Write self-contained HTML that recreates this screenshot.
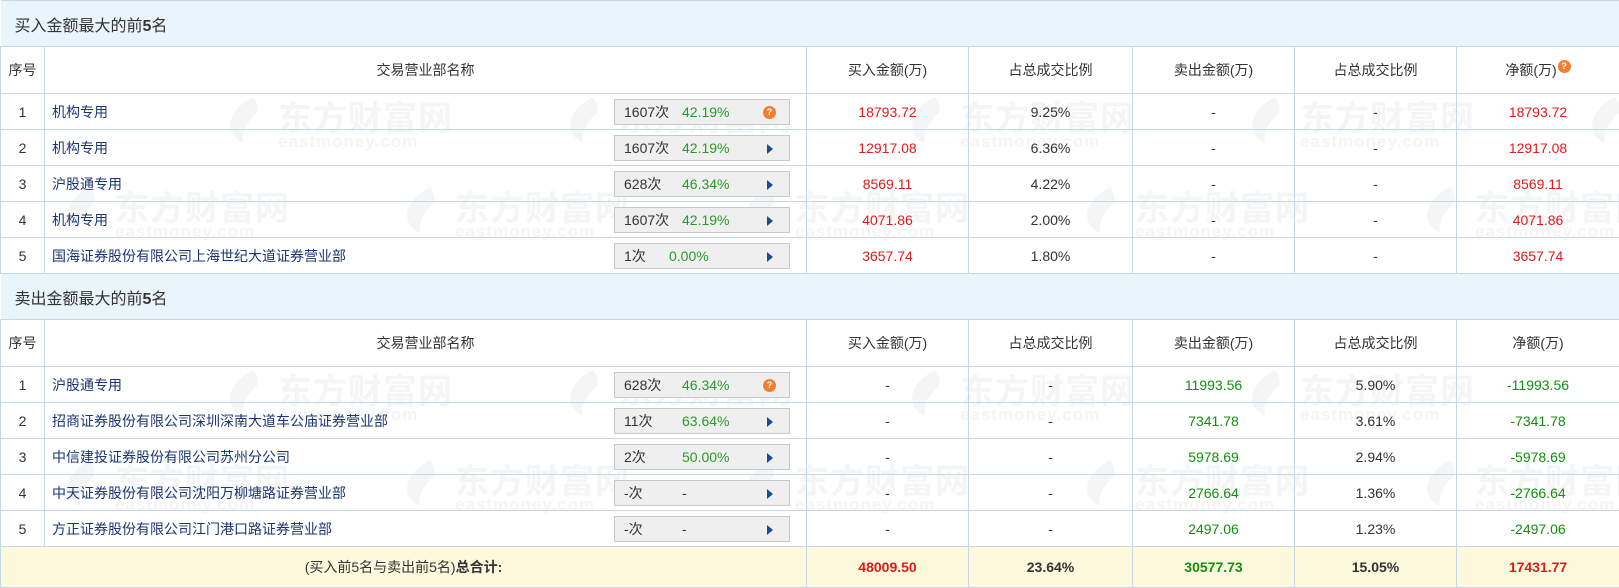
<!DOCTYPE html>
<html><head><meta charset="utf-8"><style>
*{margin:0;padding:0;box-sizing:border-box}
body{width:1619px;height:587px;overflow:hidden;background:#fff;font-family:"Liberation Sans","Noto Sans CJK SC",sans-serif;font-size:14px;color:#333;position:relative}
.wm{position:absolute;width:230px;height:55px;pointer-events:none}
.wm .lg{position:absolute;left:0;top:0;width:40px;height:50px;}
.wm .t1{position:absolute;left:55px;top:-4px;font-size:34px;font-weight:bold;color:#f5f5f5;letter-spacing:1px;white-space:nowrap;font-family:"Noto Sans CJK SC",sans-serif}
.wm .t2{position:absolute;left:55px;top:37px;font-size:17px;font-weight:bold;color:#f5f5f5;letter-spacing:1px;white-space:nowrap}
table{position:absolute;left:0;top:0;width:1619px;border-collapse:collapse;table-layout:fixed}
td{border:1px solid #c6d8e8;text-align:center;height:36px;padding:0;position:relative;background:transparent}
tr.title td{height:46px;background:#eaf4fd;text-align:left;padding-left:14px;font-size:16px;color:#333;border-left:none;border-right:none}
tr.hd td{height:47px;color:#333}
td.l{text-align:left;padding-left:7px;color:#1b3576}
.box{position:absolute;left:569px;top:5px;width:176px;height:26px;background:#efefef;border:1px solid #c8c8c8;text-align:left;padding-left:9px;line-height:24px;color:#333}
.box .c{display:inline-block;width:58px}
.box .p{color:#2a9a2a}
.arr{position:absolute;right:16px;top:8px;width:0;height:0;border-top:5px solid transparent;border-bottom:5px solid transparent;border-left:6px solid #1d4c94}
.q{position:absolute;right:13px;top:6px;width:13px;height:13px;border-radius:50%;background:#f08030;color:#fff;font-size:9px;line-height:13px;text-align:center;font-weight:bold}
.r{color:#e01b1b}.g{color:#11900f}
tr.tot td{height:41px;background:#fdf9dc;font-weight:bold}
tr.tot td.n{font-weight:normal;color:#333}
</style></head><body>
<div style="position:absolute;inset:0;z-index:0">
<div class="wm" style="left:223px;top:95px"><svg class="lg" viewBox="0 0 40 50"><path d="M30 2C14 10 4 24 8 36c2 6 8 10 12 12-2-8 2-20 14-30 2-6-1-12-4-16z" fill="#f5f5f5"/></svg><div class="t1">东方财富网</div><div class="t2">eastmoney.com</div></div>
<div class="wm" style="left:563px;top:95px"><svg class="lg" viewBox="0 0 40 50"><path d="M30 2C14 10 4 24 8 36c2 6 8 10 12 12-2-8 2-20 14-30 2-6-1-12-4-16z" fill="#f5f5f5"/></svg><div class="t1">东方财富网</div><div class="t2">eastmoney.com</div></div>
<div class="wm" style="left:905px;top:95px"><svg class="lg" viewBox="0 0 40 50"><path d="M30 2C14 10 4 24 8 36c2 6 8 10 12 12-2-8 2-20 14-30 2-6-1-12-4-16z" fill="#f5f5f5"/></svg><div class="t1">东方财富网</div><div class="t2">eastmoney.com</div></div>
<div class="wm" style="left:1245px;top:95px"><svg class="lg" viewBox="0 0 40 50"><path d="M30 2C14 10 4 24 8 36c2 6 8 10 12 12-2-8 2-20 14-30 2-6-1-12-4-16z" fill="#f5f5f5"/></svg><div class="t1">东方财富网</div><div class="t2">eastmoney.com</div></div>
<div class="wm" style="left:1585px;top:95px"><svg class="lg" viewBox="0 0 40 50"><path d="M30 2C14 10 4 24 8 36c2 6 8 10 12 12-2-8 2-20 14-30 2-6-1-12-4-16z" fill="#f5f5f5"/></svg></div>
<div class="wm" style="left:60px;top:185px"><svg class="lg" viewBox="0 0 40 50"><path d="M30 2C14 10 4 24 8 36c2 6 8 10 12 12-2-8 2-20 14-30 2-6-1-12-4-16z" fill="#f5f5f5"/></svg><div class="t1">东方财富网</div><div class="t2">eastmoney.com</div></div>
<div class="wm" style="left:400px;top:185px"><svg class="lg" viewBox="0 0 40 50"><path d="M30 2C14 10 4 24 8 36c2 6 8 10 12 12-2-8 2-20 14-30 2-6-1-12-4-16z" fill="#f5f5f5"/></svg><div class="t1">东方财富网</div><div class="t2">eastmoney.com</div></div>
<div class="wm" style="left:740px;top:185px"><svg class="lg" viewBox="0 0 40 50"><path d="M30 2C14 10 4 24 8 36c2 6 8 10 12 12-2-8 2-20 14-30 2-6-1-12-4-16z" fill="#f5f5f5"/></svg><div class="t1">东方财富网</div><div class="t2">eastmoney.com</div></div>
<div class="wm" style="left:1080px;top:185px"><svg class="lg" viewBox="0 0 40 50"><path d="M30 2C14 10 4 24 8 36c2 6 8 10 12 12-2-8 2-20 14-30 2-6-1-12-4-16z" fill="#f5f5f5"/></svg><div class="t1">东方财富网</div><div class="t2">eastmoney.com</div></div>
<div class="wm" style="left:1420px;top:185px"><svg class="lg" viewBox="0 0 40 50"><path d="M30 2C14 10 4 24 8 36c2 6 8 10 12 12-2-8 2-20 14-30 2-6-1-12-4-16z" fill="#f5f5f5"/></svg><div class="t1">东方财富网</div><div class="t2">eastmoney.com</div></div>
<div class="wm" style="left:223px;top:368px"><svg class="lg" viewBox="0 0 40 50"><path d="M30 2C14 10 4 24 8 36c2 6 8 10 12 12-2-8 2-20 14-30 2-6-1-12-4-16z" fill="#f5f5f5"/></svg><div class="t1">东方财富网</div><div class="t2">eastmoney.com</div></div>
<div class="wm" style="left:563px;top:368px"><svg class="lg" viewBox="0 0 40 50"><path d="M30 2C14 10 4 24 8 36c2 6 8 10 12 12-2-8 2-20 14-30 2-6-1-12-4-16z" fill="#f5f5f5"/></svg><div class="t1">东方财富网</div><div class="t2">eastmoney.com</div></div>
<div class="wm" style="left:905px;top:368px"><svg class="lg" viewBox="0 0 40 50"><path d="M30 2C14 10 4 24 8 36c2 6 8 10 12 12-2-8 2-20 14-30 2-6-1-12-4-16z" fill="#f5f5f5"/></svg><div class="t1">东方财富网</div><div class="t2">eastmoney.com</div></div>
<div class="wm" style="left:1245px;top:368px"><svg class="lg" viewBox="0 0 40 50"><path d="M30 2C14 10 4 24 8 36c2 6 8 10 12 12-2-8 2-20 14-30 2-6-1-12-4-16z" fill="#f5f5f5"/></svg><div class="t1">东方财富网</div><div class="t2">eastmoney.com</div></div>
<div class="wm" style="left:60px;top:458px"><svg class="lg" viewBox="0 0 40 50"><path d="M30 2C14 10 4 24 8 36c2 6 8 10 12 12-2-8 2-20 14-30 2-6-1-12-4-16z" fill="#f5f5f5"/></svg><div class="t1">东方财富网</div><div class="t2">eastmoney.com</div></div>
<div class="wm" style="left:400px;top:458px"><svg class="lg" viewBox="0 0 40 50"><path d="M30 2C14 10 4 24 8 36c2 6 8 10 12 12-2-8 2-20 14-30 2-6-1-12-4-16z" fill="#f5f5f5"/></svg><div class="t1">东方财富网</div><div class="t2">eastmoney.com</div></div>
<div class="wm" style="left:740px;top:458px"><svg class="lg" viewBox="0 0 40 50"><path d="M30 2C14 10 4 24 8 36c2 6 8 10 12 12-2-8 2-20 14-30 2-6-1-12-4-16z" fill="#f5f5f5"/></svg><div class="t1">东方财富网</div><div class="t2">eastmoney.com</div></div>
<div class="wm" style="left:1080px;top:458px"><svg class="lg" viewBox="0 0 40 50"><path d="M30 2C14 10 4 24 8 36c2 6 8 10 12 12-2-8 2-20 14-30 2-6-1-12-4-16z" fill="#f5f5f5"/></svg><div class="t1">东方财富网</div><div class="t2">eastmoney.com</div></div>
<div class="wm" style="left:1420px;top:458px"><svg class="lg" viewBox="0 0 40 50"><path d="M30 2C14 10 4 24 8 36c2 6 8 10 12 12-2-8 2-20 14-30 2-6-1-12-4-16z" fill="#f5f5f5"/></svg><div class="t1">东方财富网</div><div class="t2">eastmoney.com</div></div>
</div>
<table style="z-index:1">
<colgroup><col style="width:44px"><col style="width:762px"><col style="width:162px"><col style="width:164px"><col style="width:162px"><col style="width:162px"><col style="width:163px"></colgroup>
<tr class="title"><td colspan="7">买入金额最大的前<b>5</b>名</td></tr>
<tr class="hd"><td>序号</td><td>交易营业部名称</td><td>买入金额(万)</td><td>占总成交比例</td><td>卖出金额(万)</td><td>占总成交比例</td><td>净额(万)<span class="q" style="position:relative;display:inline-block;right:auto;top:-6px;margin-left:1px">?</span></td></tr>
<tr><td>1</td><td class="l">机构专用<div class="box"><span class="c">1607次</span><span class="p">42.19%</span><span class="q">?</span></div></td><td class="r">18793.72</td><td>9.25%</td><td>-</td><td>-</td><td class="r">18793.72</td></tr>
<tr><td>2</td><td class="l">机构专用<div class="box"><span class="c">1607次</span><span class="p">42.19%</span><span class="arr"></span></div></td><td class="r">12917.08</td><td>6.36%</td><td>-</td><td>-</td><td class="r">12917.08</td></tr>
<tr><td>3</td><td class="l">沪股通专用<div class="box"><span class="c">628次</span><span class="p">46.34%</span><span class="arr"></span></div></td><td class="r">8569.11</td><td>4.22%</td><td>-</td><td>-</td><td class="r">8569.11</td></tr>
<tr><td>4</td><td class="l">机构专用<div class="box"><span class="c">1607次</span><span class="p">42.19%</span><span class="arr"></span></div></td><td class="r">4071.86</td><td>2.00%</td><td>-</td><td>-</td><td class="r">4071.86</td></tr>
<tr><td>5</td><td class="l">国海证券股份有限公司上海世纪大道证券营业部<div class="box"><span class="c" style="width:45px">1次</span><span class="p">0.00%</span><span class="arr"></span></div></td><td class="r">3657.74</td><td>1.80%</td><td>-</td><td>-</td><td class="r">3657.74</td></tr>
<tr class="title"><td colspan="7">卖出金额最大的前<b>5</b>名</td></tr>
<tr class="hd"><td>序号</td><td>交易营业部名称</td><td>买入金额(万)</td><td>占总成交比例</td><td>卖出金额(万)</td><td>占总成交比例</td><td>净额(万)</td></tr>
<tr><td>1</td><td class="l">沪股通专用<div class="box"><span class="c">628次</span><span class="p">46.34%</span><span class="q">?</span></div></td><td>-</td><td>-</td><td class="g">11993.56</td><td>5.90%</td><td class="g">-11993.56</td></tr>
<tr><td>2</td><td class="l">招商证券股份有限公司深圳深南大道车公庙证券营业部<div class="box"><span class="c">11次</span><span class="p r">63.64%</span><span class="arr"></span></div></td><td>-</td><td>-</td><td class="g">7341.78</td><td>3.61%</td><td class="g">-7341.78</td></tr>
<tr><td>3</td><td class="l">中信建投证券股份有限公司苏州分公司<div class="box"><span class="c">2次</span><span class="p">50.00%</span><span class="arr"></span></div></td><td>-</td><td>-</td><td class="g">5978.69</td><td>2.94%</td><td class="g">-5978.69</td></tr>
<tr><td>4</td><td class="l">中天证券股份有限公司沈阳万柳塘路证券营业部<div class="box"><span class="c">-次</span><span style="color:#333">-</span><span class="arr"></span></div></td><td>-</td><td>-</td><td class="g">2766.64</td><td>1.36%</td><td class="g">-2766.64</td></tr>
<tr><td>5</td><td class="l">方正证券股份有限公司江门港口路证券营业部<div class="box"><span class="c">-次</span><span style="color:#333">-</span><span class="arr"></span></div></td><td>-</td><td>-</td><td class="g">2497.06</td><td>1.23%</td><td class="g">-2497.06</td></tr>
<tr class="tot"><td colspan="2" class="n">(买入前5名与卖出前5名)<b>总合计:</b></td><td class="r">48009.50</td><td>23.64%</td><td class="g">30577.73</td><td>15.05%</td><td class="r">17431.77</td></tr>
</table>
</body></html>
